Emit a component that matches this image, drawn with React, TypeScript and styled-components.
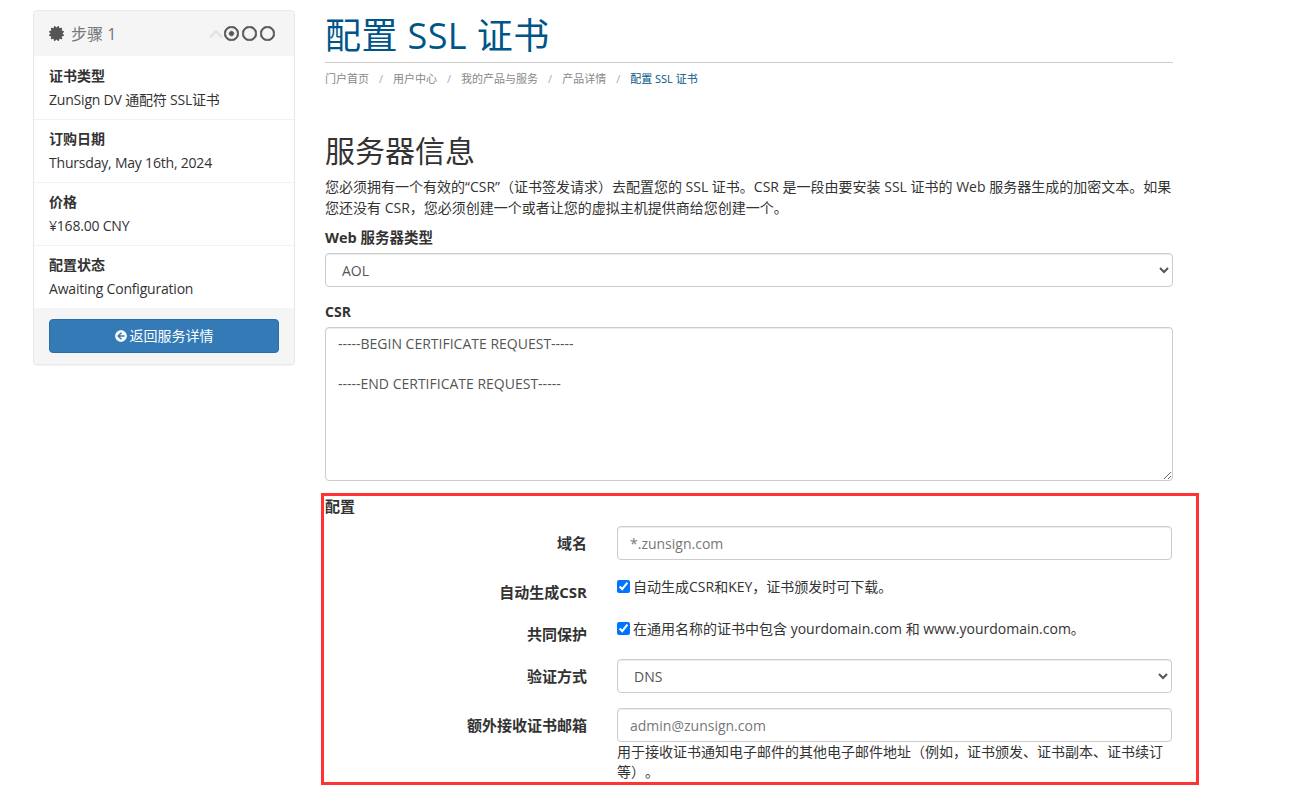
import styled, { createGlobalStyle } from "styled-components"
import { FaArrowCircleLeft, FaCertificate, FaChevronUp, FaRegCircle, FaRegDotCircle } from "react-icons/fa"

const GlobalStyle = createGlobalStyle`
   html, body {
      margin: 0;
      height: 797px;
      overflow: hidden;
      background: #fff;
   }
   body {
      font-family: "Open Sans", "Noto Sans CJK SC", sans-serif;
      font-size: 14px;
      line-height: 20px;
      color: #333;
      text-spacing-trim: space-all;
   }
   * { box-sizing: border-box; }
`
const Page = styled.div`
   display: flex;
   align-items: flex-start;
   gap: 30px;
   padding: 10px 0 0 33px;
`
const Sidebar = styled.aside`
   width: 262px;
   flex: none;
   border: 1px solid #e8e8e8;
   border-radius: 4px;
   box-shadow: 0 1px 1px rgba(0, 0, 0, .05);
   overflow: hidden;
`
const SideHeading = styled.div`
   height: 45px;
   display: flex;
   align-items: center;
   padding: 0 19px 0 15px;
   background: #f5f5f5;
   color: #777;
   font-size: 16px;
   svg { color: #555; }
`
const HeadingTitle = styled.span`
   margin-left: 7px;
   flex: 1;
`
const Collapse = styled(FaChevronUp)`
   && { color: #e3e3e3; }
   font-size: 16px;
`
const StepIcons = styled.span`
   display: flex;
   gap: 3px;
   font-size: 15px;
   svg { stroke: currentColor; stroke-width: 24; }
`
const SideItem = styled.div`
   height: 63px;
   padding: 9px 15px 0;
   & + & {
      padding-top: 8px;
      border-top: 1px solid #f2f2f2;
   }
`
const SideLabel = styled.div`
   font-weight: 700;
   line-height: 21px;
`
const SideValue = styled.div`
   margin-top: 3px;
   line-height: 22px;
   letter-spacing: -.2px;
`
const SideFooter = styled.div`
   height: 56px;
   padding: 11px 15px;
   background: #f5f5f5;
`
const BackButton = styled.button`
   width: 100%;
   height: 34px;
   display: flex;
   align-items: center;
   justify-content: center;
   gap: 3px;
   font: inherit;
   color: #fff;
   background: #337ab7;
   border: 1px solid #2e6da4;
   border-radius: 4px;
   svg { font-size: 12px; }
`
const Main = styled.main`
   width: 848px;
   flex: none;
`
const PageTitle = styled.h1`
   margin: 0;
   height: 53px;
   padding-top: 3px;
   font-size: 36px;
   line-height: 46px;
   font-weight: 400;
   letter-spacing: .4px;
   color: #058;
   border-bottom: 1px solid #ccc;
`
const Breadcrumb = styled.ol`
   display: flex;
   margin: 8px 0 0;
   padding: 0;
   list-style: none;
   font-size: 11px;
   line-height: 16px;
   color: #888;
   li + li::before {
      content: "/";
      padding: 0 10px;
      color: #aaa;
   }
`
const Crumb = styled.li<{ $active?: boolean }>`
   color: ${props => props.$active ? "#058" : "#888"};
`
const SectionTitle = styled.h2`
   margin: 47px 0 0;
   font-size: 30px;
   line-height: 33px;
   font-weight: 400;
`
const Intro = styled.p`
   margin: 9px 0 0;
   line-height: 21px;
`
const FieldLabel = styled.label<{ $size?: number }>`
   display: block;
   margin: 0 0 5px;
   font-size: ${props => props.$size ?? 14}px;
   font-weight: 700;
`
const Group = styled.div<{ $top: number }>`
   margin-top: ${props => props.$top}px;
`
const Select = styled.select`
   display: block;
   width: 100%;
   height: 34px;
   padding: 6px 12px;
   font: inherit;
   color: #555;
   background: #fff;
   border: 1px solid #ccc;
   border-radius: 4px;
   box-shadow: inset 0 1px 1px rgba(0, 0, 0, .075);
`
const Input = styled.input`
   display: block;
   width: 100%;
   height: 34px;
   padding: 6px 12px;
   font: inherit;
   color: #555;
   border: 1px solid #ccc;
   border-radius: 4px;
   box-shadow: inset 0 1px 1px rgba(0, 0, 0, .075);
   &::placeholder { color: #777; opacity: 1; }
`
const Textarea = styled.textarea`
   display: block;
   width: 100%;
   height: 154px;
   padding: 6px 12px;
   font: inherit;
   color: #555;
   border: 1px solid #ccc;
   border-radius: 4px;
   box-shadow: inset 0 1px 1px rgba(0, 0, 0, .075);
`
const ConfigSection = styled.section`
   position: relative;
   margin-top: 15px;
`
const Highlight = styled.div`
   position: absolute;
   top: -3px;
   left: -4px;
   width: 878px;
   height: 292px;
   border: 3px solid #f33;
   pointer-events: none;
`
const ConfigTitle = styled.div`
   font-size: 15px;
   font-weight: 700;
   line-height: 20px;
`
const Row = styled.div<{ $height: number }>`
   display: grid;
   grid-template-columns: 262px 555px;
   column-gap: 30px;
   height: ${props => props.$height}px;
`
const RowLabel = styled.label<{ $top?: number }>`
   padding-top: ${props => props.$top ?? 10}px;
   text-align: right;
   font-size: 15px;
   font-weight: 700;
`
const Field = styled.div<{ $top: number }>`
   padding-top: ${props => props.$top}px;
`
const CheckLine = styled.label`
   display: flex;
   align-items: center;
   gap: 3px;
   height: 20px;
   input { width: 13px; height: 13px; margin: 0 0 2px; }
`
const HelpText = styled.div`
   line-height: 20px;
`

export default function App() {
   return (
      <>
         <GlobalStyle />
         <Page>
            <Sidebar>
               <SideHeading>
                  <FaCertificate size={15} />
                  <HeadingTitle>步骤 1</HeadingTitle>
                  <Collapse />
                  <StepIcons>
                     <FaRegDotCircle />
                     <FaRegCircle />
                     <FaRegCircle />
                  </StepIcons>
               </SideHeading>
               <SideItem>
                  <SideLabel>证书类型</SideLabel>
                  <SideValue>ZunSign DV 通配符 SSL证书</SideValue>
               </SideItem>
               <SideItem>
                  <SideLabel>订购日期</SideLabel>
                  <SideValue>Thursday, May 16th, 2024</SideValue>
               </SideItem>
               <SideItem>
                  <SideLabel>价格</SideLabel>
                  <SideValue>¥168.00 CNY</SideValue>
               </SideItem>
               <SideItem>
                  <SideLabel>配置状态</SideLabel>
                  <SideValue>Awaiting Configuration</SideValue>
               </SideItem>
               <SideFooter>
                  <BackButton><FaArrowCircleLeft />返回服务详情</BackButton>
               </SideFooter>
            </Sidebar>
            <Main>
               <PageTitle>配置 SSL 证书</PageTitle>
               <Breadcrumb>
                  <Crumb>门户首页</Crumb>
                  <Crumb>用户中心</Crumb>
                  <Crumb>我的产品与服务</Crumb>
                  <Crumb>产品详情</Crumb>
                  <Crumb $active>配置 SSL 证书</Crumb>
               </Breadcrumb>
               <SectionTitle>服务器信息</SectionTitle>
               <Intro>您必须拥有一个有效的“CSR”（证书签发请求）去配置您的 SSL 证书。CSR 是一段由要安装 SSL 证书的 Web 服务器生成的加密文本。如果您还没有 CSR，您必须创建一个或者让您的虚拟主机提供商给您创建一个。</Intro>
               <Group $top={10}>
                  <FieldLabel $size={14.5}>Web 服务器类型</FieldLabel>
                  <Select defaultValue="AOL"><option>AOL</option></Select>
               </Group>
               <Group $top={15}>
                  <FieldLabel>CSR</FieldLabel>
                  <Textarea readOnly defaultValue={"-----BEGIN CERTIFICATE REQUEST-----\n\n-----END CERTIFICATE REQUEST-----"} />
               </Group>
               <ConfigSection>
                  <Highlight />
                  <ConfigTitle>配置</ConfigTitle>
                  <Row $height={56}>
                     <RowLabel $top={17}>域名</RowLabel>
                     <Field $top={10}><Input placeholder="*.zunsign.com" /></Field>
                  </Row>
                  <Row $height={42}>
                     <RowLabel>自动生成CSR</RowLabel>
                     <Field $top={5}><CheckLine><input type="checkbox" defaultChecked />自动生成CSR和KEY，证书颁发时可下载。</CheckLine></Field>
                  </Row>
                  <Row $height={42}>
                     <RowLabel>共同保护</RowLabel>
                     <Field $top={5}><CheckLine><input type="checkbox" defaultChecked />在通用名称的证书中包含 yourdomain.com 和 www.yourdomain.com。</CheckLine></Field>
                  </Row>
                  <Row $height={49}>
                     <RowLabel>验证方式</RowLabel>
                     <Field $top={3}><Select defaultValue="DNS"><option>DNS</option></Select></Field>
                  </Row>
                  <Row $height={80}>
                     <RowLabel>额外接收证书邮箱</RowLabel>
                     <Field $top={3}>
                        <Input placeholder="admin@zunsign.com" />
                        <HelpText>用于接收证书通知电子邮件的其他电子邮件地址（例如，证书颁发、证书副本、证书续订等）。</HelpText>
                     </Field>
                  </Row>
               </ConfigSection>
            </Main>
         </Page>
      </>
   )
}
